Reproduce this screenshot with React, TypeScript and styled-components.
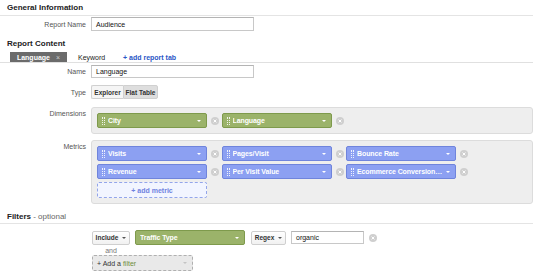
import styled, { createGlobalStyle } from "styled-components";

const GlobalStyle = createGlobalStyle`
    body {
        margin: 0;
        background: #ffffff;
        font-family: "Liberation Sans", Arial, sans-serif;
        color: #222;
    }
`;

const Page = styled.div`
    width: 533px;
    padding-top: 3px;
`;

const SectionTitle = styled.div<{ $top?: number; $line?: boolean; $pad?: number }>`
    margin-top: ${(props) => props.$top ?? 0}px;
    padding: 0 0 ${(props) => props.$pad ?? 2}px 7px;
    font-size: 8px;
    line-height: 10px;
    font-weight: bold;
    color: #222;
    border-bottom: ${(props) => (props.$line ? "1px solid #e4e4e4" : "1px solid transparent")};
    span {
        font-weight: normal;
        color: #666;
    }
`;

const FormRow = styled.div<{ $top: number; $start?: boolean }>`
    display: grid;
    grid-template-columns: 86px 1fr;
    column-gap: 5px;
    align-items: ${(props) => (props.$start ? "start" : "center")};
    margin-top: ${(props) => props.$top}px;
`;

const Label = styled.div<{ $pad?: number }>`
    text-align: right;
    font-size: 7px;
    line-height: 9px;
    color: #555;
    padding-top: ${(props) => props.$pad ?? 0}px;
`;

const TextInput = styled.div<{ $w: number; $h?: number }>`
    box-sizing: border-box;
    width: ${(props) => props.$w}px;
    height: ${(props) => props.$h ?? 14}px;
    border: 1px solid #c8c8c8;
    border-top-color: #b4b4b4;
    background: #fff;
    font-size: 7px;
    line-height: 9px;
    color: #111;
    padding-left: 4px;
    display: flex;
    align-items: center;
`;

const TabStrip = styled.div`
    height: 10px;
    display: flex;
    align-items: stretch;
    padding-left: 10px;
    border-bottom: 1px solid #e0e0e0;
    line-height: 9px;
`;

const Tab = styled.div<{ $active?: boolean; $w: number }>`
    width: ${(props) => props.$w}px;
    box-sizing: border-box;
    display: flex;
    align-items: center;
    justify-content: ${(props) => (props.$active ? "center" : "flex-start")};
    gap: 6px;
    font-size: 7px;
    font-weight: ${(props) => (props.$active ? "bold" : "normal")};
    color: ${(props) => (props.$active ? "#fff" : "#222")};
    background: ${(props) => (props.$active ? "#6b6b6b" : "transparent")};
    padding-left: ${(props) => (props.$active ? 0 : 11)}px;
    em {
        font-style: normal;
        font-weight: normal;
        color: #ccc;
    }
`;

const TabLink = styled.div`
    display: flex;
    align-items: center;
    font-size: 7px;
    font-weight: bold;
    color: #2a56c6;
    padding-left: 11px;
`;

const Segmented = styled.div`
    display: flex;
    height: 14px;
`;

const Segment = styled.div<{ $on?: boolean; $w: number }>`
    box-sizing: border-box;
    width: ${(props) => props.$w}px;
    display: flex;
    align-items: center;
    justify-content: center;
    font-size: 6.5px;
    font-weight: bold;
    color: #333;
    border: 1px solid #d0d0d0;
    background: ${(props) => (props.$on ? "#dedede" : "#f5f5f5")};
    &:first-child {
        border-radius: 2px 0 0 2px;
        border-right: none;
    }
    &:last-child {
        border-radius: 0 2px 2px 0;
    }
`;

const Panel = styled.div`
    box-sizing: border-box;
    width: 442px;
    background: #eeeeee;
    border: 1px solid #dcdcdc;
    border-radius: 3px;
    padding: 5px 0 5px 5px;
`;

const ChipGrid = styled.div`
    display: grid;
    grid-template-columns: repeat(3, 124.5px);
    row-gap: 3px;
`;

const ChipCell = styled.div`
    display: flex;
    align-items: center;
    gap: 4px;
`;

const Chip = styled.div<{ $kind: "green" | "blue" }>`
    box-sizing: border-box;
    width: 110px;
    height: 15px;
    display: flex;
    align-items: center;
    gap: 3px;
    padding: 0 5px 0 4px;
    border-radius: 2px;
    background: ${(props) => (props.$kind === "green" ? "#9bb36a" : "#8ca0f2")};
    border: 1px solid ${(props) => (props.$kind === "green" ? "#7e9a4c" : "#6f84dc")};
    color: #fff;
    font-size: 7px;
    line-height: 9px;
    font-weight: bold;
    letter-spacing: -0.1px;
    white-space: nowrap;
`;

const Grip = styled.span`
    width: 1px;
    height: 8px;
    border-left: 1px dotted rgba(255, 255, 255, 0.85);
    border-right: 1px dotted rgba(255, 255, 255, 0.85);
    flex: none;
`;

const ChipText = styled.span`
    flex: 1;
    overflow: hidden;
    text-overflow: ellipsis;
`;

const Caret = styled.span<{ $color?: string }>`
    flex: none;
    width: 0;
    height: 0;
    border-left: 2.5px solid transparent;
    border-right: 2.5px solid transparent;
    border-top: 2.5px solid ${(props) => props.$color ?? "#fff"};
`;

const AddMetric = styled.div`
    box-sizing: border-box;
    width: 110px;
    height: 16px;
    display: flex;
    align-items: center;
    justify-content: center;
    border: 1px dashed #93a5ea;
    border-radius: 2px;
    background: #f2f5ff;
    color: #6f82e0;
    font-size: 7px;
    font-weight: bold;
`;

const FilterArea = styled.div`
    margin-top: 6px;
    padding-left: 92px;
`;

const FilterRow = styled.div`
    display: flex;
    align-items: center;
    gap: 5px;
    height: 15px;
`;

const DropButton = styled.div<{ $w: number }>`
    box-sizing: border-box;
    width: ${(props) => props.$w}px;
    height: 14px;
    display: flex;
    align-items: center;
    justify-content: center;
    gap: 4px;
    font-size: 6.5px;
    font-weight: bold;
    color: #333;
    border: 1px solid #cfcfcf;
    border-radius: 2px;
    background: linear-gradient(#ffffff, #f1f1f1);
`;

const And = styled.div`
    width: 38px;
    margin-top: 1px;
    text-align: center;
    font-size: 7px;
    color: #777;
    line-height: 9px;
`;

const AddFilter = styled.div`
    box-sizing: border-box;
    width: 101px;
    height: 16px;
    display: flex;
    align-items: center;
    justify-content: space-between;
    padding: 0 5px 0 4px;
    border: 1px dashed #b0b0b0;
    border-radius: 2px;
    background: #e9e9e9;
    font-size: 7px;
    color: #333;
    b {
        font-weight: normal;
        color: #6f8f3a;
    }
`;

function Remove() {
    return (
        <svg width="8" height="8" viewBox="0 0 8 8" style={{ flex: "none" }}>
            <circle cx="4" cy="4" r="4" fill="#cfcfcf" />
            <path d="M2.6 2.6 L5.4 5.4 M5.4 2.6 L2.6 5.4" stroke="#fff" strokeWidth="1" />
        </svg>
    );
}

function Pill({ kind, text }: { kind: "green" | "blue"; text: string }) {
    return (
        <ChipCell>
            <Chip $kind={kind}>
                <Grip />
                <ChipText>{text}</ChipText>
                <Caret />
            </Chip>
            <Remove />
        </ChipCell>
    );
}

const metrics = ["Visits", "Pages/Visit", "Bounce Rate", "Revenue", "Per Visit Value", "Ecommerce Conversion Rate"];

function App() {
    return (
        <Page>
            <GlobalStyle />
            <SectionTitle $line>General Information</SectionTitle>
            <FormRow $top={1}>
                <Label>Report Name</Label>
                <TextInput $w={163}>Audience</TextInput>
            </FormRow>

            <SectionTitle $top={8}>Report Content</SectionTitle>
            <TabStrip>
                <Tab $active $w={57}>
                    Language <em>×</em>
                </Tab>
                <Tab $w={45}>Keyword</Tab>
                <TabLink>+ add report tab</TabLink>
            </TabStrip>
            <FormRow $top={2}>
                <Label>Name</Label>
                <TextInput $w={163} $h={13}>Language</TextInput>
            </FormRow>
            <FormRow $top={7}>
                <Label>Type</Label>
                <Segmented>
                    <Segment $w={32}>Explorer</Segment>
                    <Segment $w={35} $on>Flat Table</Segment>
                </Segmented>
            </FormRow>
            <FormRow $top={8} $start>
                <Label $pad={2}>Dimensions</Label>
                <Panel>
                    <ChipGrid>
                        <Pill kind="green" text="City" />
                        <Pill kind="green" text="Language" />
                    </ChipGrid>
                </Panel>
            </FormRow>
            <FormRow $top={6} $start>
                <Label $pad={2}>Metrics</Label>
                <Panel>
                    <ChipGrid>
                        {metrics.map((m) => (
                            <Pill key={m} kind="blue" text={m} />
                        ))}
                        <AddMetric>+ add metric</AddMetric>
                    </ChipGrid>
                </Panel>
            </FormRow>

            <SectionTitle $top={8} $line $pad={1}>
                Filters <span>- optional</span>
            </SectionTitle>
            <FilterArea>
                <FilterRow>
                    <DropButton $w={38}>
                        Include <Caret $color="#555" />
                    </DropButton>
                    <Chip $kind="green">
                        <ChipText>Traffic Type</ChipText>
                        <Caret />
                    </Chip>
                    <DropButton $w={35} style={{ marginLeft: 1 }}>
                        Regex <Caret $color="#555" />
                    </DropButton>
                    <TextInput $w={73} $h={13}>organic</TextInput>
                    <Remove />
                </FilterRow>
                <And>and</And>
                <AddFilter>
                    <span>
                        + Add a <b>filter</b>
                    </span>
                    <Caret $color="#c4c4c4" />
                </AddFilter>
            </FilterArea>
        </Page>
    );
}

export default App;
